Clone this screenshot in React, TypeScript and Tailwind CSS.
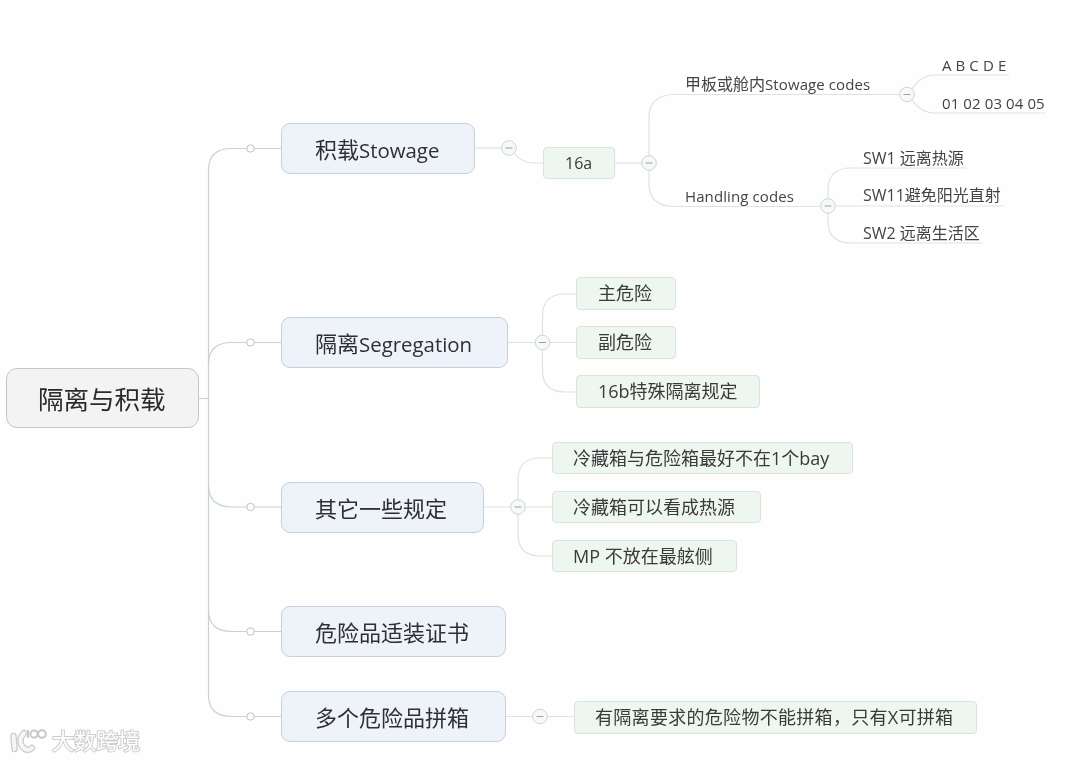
import type { ReactNode } from "react"

const font = "font-['Open_Sans','Noto_Sans_CJK_SC',sans-serif]"

interface MapNode {
  id: string
  label: ReactNode
  box: string
}

const Big = ({ children }: { children: ReactNode }) => <span className="text-[20.4px]">{children}</span>
const Small = ({ children }: { children: ReactNode }) => <span className="text-[15px] tracking-[0.1px]">{children}</span>

const topics: MapNode[] = [
  { id: "stowage", label: <>积载<Big>Stowage</Big></>, box: "left-[281px] top-[123px] w-[194px] h-[51px]" },
  { id: "segregation", label: <>隔离<Big>Segregation</Big></>, box: "left-[281px] top-[317px] w-[227px] h-[51px]" },
  { id: "other", label: "其它一些规定", box: "left-[281px] top-[482px] w-[203px] h-[51px]" },
  { id: "cert", label: "危险品适装证书", box: "left-[281px] top-[606px] w-[225px] h-[51px]" },
  { id: "mixed", label: "多个危险品拼箱", box: "left-[281px] top-[691px] w-[225px] h-[51px]" },
]

const subTopics: MapNode[] = [
  { id: "16a", label: "16a", box: "left-[543px] top-[147px] w-[72px] h-[32px] pl-[21px] text-[16px]" },
  { id: "main", label: "主危险", box: "left-[576px] top-[277px] w-[100px] h-[33px] pl-[21px] text-[18px]" },
  { id: "sub", label: "副危险", box: "left-[576px] top-[326px] w-[100px] h-[33px] pl-[21px] text-[18px]" },
  { id: "16b", label: "16b特殊隔离规定", box: "left-[576px] top-[375px] w-[184px] h-[33px] pl-[21px] text-[18px]" },
  { id: "reefer", label: "冷藏箱与危险箱最好不在1个bay", box: "left-[552px] top-[442px] w-[301px] h-[32px] pl-[20px] text-[18px]" },
  { id: "heat", label: "冷藏箱可以看成热源", box: "left-[552px] top-[491px] w-[209px] h-[32px] pl-[20px] text-[18px]" },
  { id: "mp", label: "MP 不放在最舷侧", box: "left-[552px] top-[540px] w-[185px] h-[32px] pl-[20px] text-[18px]" },
  { id: "x", label: "有隔离要求的危险物不能拼箱，只有X可拼箱", box: "left-[574px] top-[701px] w-[403px] h-[33px] pl-[20px] text-[18px] tracking-[0.3px]" },
]

const labels: MapNode[] = [
  { id: "deck", label: <>甲板或舱内<Small>Stowage codes</Small></>, box: "left-[685px] top-[73px]" },
  { id: "handling", label: <Small>Handling codes</Small>, box: "left-[685px] top-[185px]" },
  { id: "abc", label: <Small>A B C D E</Small>, box: "left-[942px] top-[54px]" },
  { id: "num", label: <Small>01 02 03 04 05</Small>, box: "left-[942px] top-[92px]" },
  { id: "sw1", label: "SW1 远离热源", box: "left-[863px] top-[147px]" },
  { id: "sw11", label: "SW11避免阳光直射", box: "left-[863px] top-[184px]" },
  { id: "sw2", label: "SW2 远离生活区", box: "left-[863px] top-[222px]" },
]

const toggles = [
  [509, 148],
  [649, 163],
  [907, 94.5],
  [828, 206],
  [542.5, 342.5],
  [518, 507],
  [540, 716.5],
]

function Connectors() {
  return (
    <svg className="absolute left-0 top-0" width="1080" height="761" fill="none">
      <g stroke="#c4d2d9" strokeWidth="1.2">
        <path d="M199 398.5H208.5" />
        <path d="M208.5 398V170Q208.5 148.5 232 148.5H281" />
        <path d="M208.5 364Q208.5 342.5 232 342.5H281" />
        <path d="M208.5 398V485Q208.5 507 232 507H281" />
        <path d="M208.5 485V610Q208.5 631.5 232 631.5H281" />
        <path d="M208.5 610V695Q208.5 716.5 232 716.5H281" />
      </g>
      <g stroke="#dce3e3" strokeWidth="1.2">
        <path d="M475 148H502" />
        <path d="M514 153Q522 163 534 163H543" />
        <path d="M615 163H642" />
        <path d="M649 163V118Q649 94.5 675 94.5H900" />
        <path d="M649 163V184Q649 206.5 675 206.5H821" />
        <path d="M912 89Q921 75 935 75H1009" />
        <path d="M912 100Q921 113 935 113H1045" />
        <path d="M828 200V190Q828 168 851 168H967" />
        <path d="M835 206H1004" />
        <path d="M828 213V221Q828 243 851 243H983" />
        <path d="M508 342.5H535M550 342.5H576" />
        <path d="M542.5 335V316Q542.5 294 565 294H576" />
        <path d="M542.5 350V370Q542.5 392 565 392H576" />
        <path d="M484 507H511M525 507H552" />
        <path d="M518 500V480Q518 458 540 458H552" />
        <path d="M518 514V534Q518 556 540 556H552" />
        <path d="M506 716.5H533M547 716.5H574" />
      </g>
      {[148.5, 342.5, 507, 631.5, 716.5].map((y) => (
        <circle key={y} cx="250.5" cy={y} r="3.7" fill="#fff" stroke="#b9c6c8" />
      ))}
      {toggles.map(([x, y]) => (
        <g key={x}>
          <circle cx={x} cy={y} r="7.3" fill="#f7f9f9" stroke="#ccd6d6" />
          <path d={`M${x - 3.5} ${y}H${x + 3.5}`} stroke="#9aa3a3" />
        </g>
      ))}
    </svg>
  )
}

function Watermark() {
  return (
    <div className="absolute left-[10px] top-[727px] flex items-center gap-[2px]">
      <svg width="40" height="26" viewBox="0 0 40 26" fill="none">
        <g stroke="#cccccc" strokeWidth="6.5" strokeLinecap="round">
          <path d="M3.5 9L4.5 22" />
          <path d="M14 6C9 11 9 18 15 22C18 23.5 20 23 22 21" />
        </g>
        <g stroke="#f6f6f6" strokeWidth="4" strokeLinecap="round">
          <path d="M3.5 9L4.5 22" />
          <path d="M14 6C9 11 9 18 15 22C18 23.5 20 23 22 21" />
        </g>
        <path d="M18 3V11" stroke="#c8c8c8" strokeWidth="2" />
        <circle cx="24" cy="7" r="3.6" fill="#fff" stroke="#c8c8c8" strokeWidth="2" />
        <circle cx="32" cy="7" r="3.8" fill="#fff" stroke="#c8c8c8" strokeWidth="2" />
      </svg>
      <span className={`${font} text-[22px] leading-none text-white [-webkit-text-stroke:2px_#cdcdcd] [paint-order:stroke_fill]`}>大数跨境</span>
    </div>
  )
}

export default function App() {
  return (
    <div className={`${font} relative w-[1080px] h-[761px] overflow-hidden bg-[#fefefe] text-[#333] blur-[0.4px]`}>
      <Connectors />

      <div className="absolute left-[6px] top-[368px] w-[193px] h-[60px] flex items-center pl-[31px] pt-[2px] rounded-[11px] border border-[#c6c6c6] bg-[#f3f3f3] text-[25.5px] text-[#2a2a2a]">
        隔离与积载
      </div>

      {topics.map((node) => (
        <div
          key={node.id}
          className={`${node.box} absolute flex items-center pl-[33px] pt-[1px] rounded-[9px] border border-[#c3d1df] bg-[#eef3fa] text-[22px] text-[#2f2f2f]`}
        >
          <span className="whitespace-nowrap">{node.label}</span>
        </div>
      ))}

      {subTopics.map((node) => (
        <div
          key={node.id}
          className={`${node.box} absolute flex items-center rounded-[4px] border border-[#d8e5dc] bg-[#edf6ef] text-[#3a3a3a]`}
        >
          <span className="whitespace-nowrap">{node.label}</span>
        </div>
      ))}

      {labels.map((node) => (
        <div key={node.id} className={`${node.box} absolute text-[16px] leading-[22px] text-[#444] whitespace-nowrap`}>
          {node.label}
        </div>
      ))}

      <Watermark />
    </div>
  )
}
